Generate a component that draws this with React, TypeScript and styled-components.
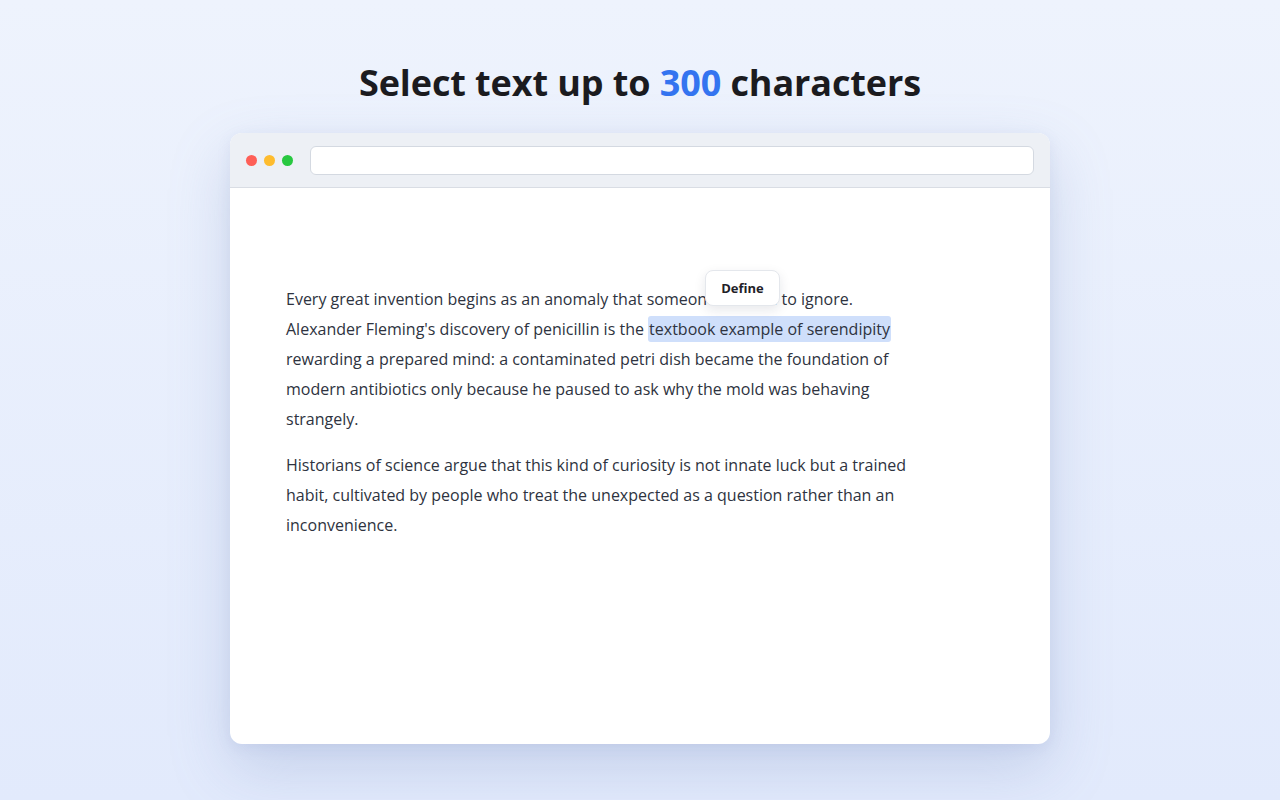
import styled, { createGlobalStyle } from "styled-components";

const GlobalStyle = createGlobalStyle`
  html, body {
    margin: 0;
    padding: 0;
  }
  body {
    font-family: "Open Sans", "Noto Sans", sans-serif;
    background: linear-gradient(180deg, #eef3fd 0%, #e2eafc 100%);
    min-height: 800px;
  }
`;

const Page = styled.div`
  width: 1280px;
  height: 800px;
  display: flex;
  flex-direction: column;
  align-items: center;
  box-sizing: border-box;
  padding-top: 58px;
`;

const Title = styled.h1`
  margin: 0 0 25px;
  font-size: 36px;
  line-height: 50px;
  font-weight: 700;
  color: #1b1b1f;
  letter-spacing: -0.1px;
`;

const Accent = styled.span`
  color: #3474f0;
`;

const BrowserWindow = styled.div`
  width: 820px;
  height: 611px;
  background: #ffffff;
  border-radius: 12px;
  overflow: hidden;
  box-shadow: 0 24px 60px rgba(120, 140, 190, 0.28), 0 4px 14px rgba(120, 140, 190, 0.12);
  display: flex;
  flex-direction: column;
`;

const TitleBar = styled.div`
  height: 55px;
  flex-shrink: 0;
  box-sizing: border-box;
  background: #edf0f5;
  border-bottom: 1px solid #d9dde4;
  display: flex;
  align-items: center;
  padding: 0 16px;
  gap: 7px;
`;

const Dot = styled.span<{ $color: string }>`
  width: 11px;
  height: 11px;
  border-radius: 50%;
  background: ${(p) => p.$color};
`;

const UrlBar = styled.div`
  flex: 1;
  height: 29px;
  margin-left: 10px;
  box-sizing: border-box;
  background: #ffffff;
  border: 1px solid #d4d9e1;
  border-radius: 6px;
`;

const Content = styled.div`
  position: relative;
  padding: 96px 56px 0;
`;

const Paragraph = styled.p`
  margin: 0 0 16px;
  max-width: 630px;
  font-size: 16px;
  line-height: 30px;
  color: #2e3340;
`;

const Highlight = styled.mark`
  background: #cfdffb;
  color: inherit;
  border-radius: 3px;
  padding: 2px 1px;
`;

const Popover = styled.div`
  position: absolute;
  left: 475px;
  top: 82px;
  width: 75px;
  height: 36px;
  box-sizing: border-box;
  display: flex;
  align-items: center;
  justify-content: center;
  background: #ffffff;
  border: 1px solid #e4e7ec;
  border-radius: 8px;
  box-shadow: 0 4px 12px rgba(20, 30, 60, 0.1);
  font-size: 13px;
  font-weight: 700;
  color: #1f2228;
`;

export default function App() {
  return (
    <>
      <GlobalStyle />
      <Page>
        <Title>
          Select text up to <Accent>300</Accent> characters
        </Title>
        <BrowserWindow>
          <TitleBar>
            <Dot $color="#fe5f57" />
            <Dot $color="#febc2e" />
            <Dot $color="#28c840" />
            <UrlBar />
          </TitleBar>
          <Content>
            <Paragraph>
              Every great invention begins as an anomaly that someone refused to ignore.
              Alexander Fleming's discovery of penicillin is the{" "}
              <Highlight>textbook example of serendipity</Highlight> rewarding a prepared
              mind: a contaminated petri dish became the foundation of modern antibiotics
              only because he paused to ask why the mold was behaving strangely.
            </Paragraph>
            <Paragraph>
              Historians of science argue that this kind of curiosity is not innate luck but
              a trained habit, cultivated by people who treat the unexpected as a question
              rather than an inconvenience.
            </Paragraph>
            <Popover>Define</Popover>
          </Content>
        </BrowserWindow>
      </Page>
    </>
  );
}
